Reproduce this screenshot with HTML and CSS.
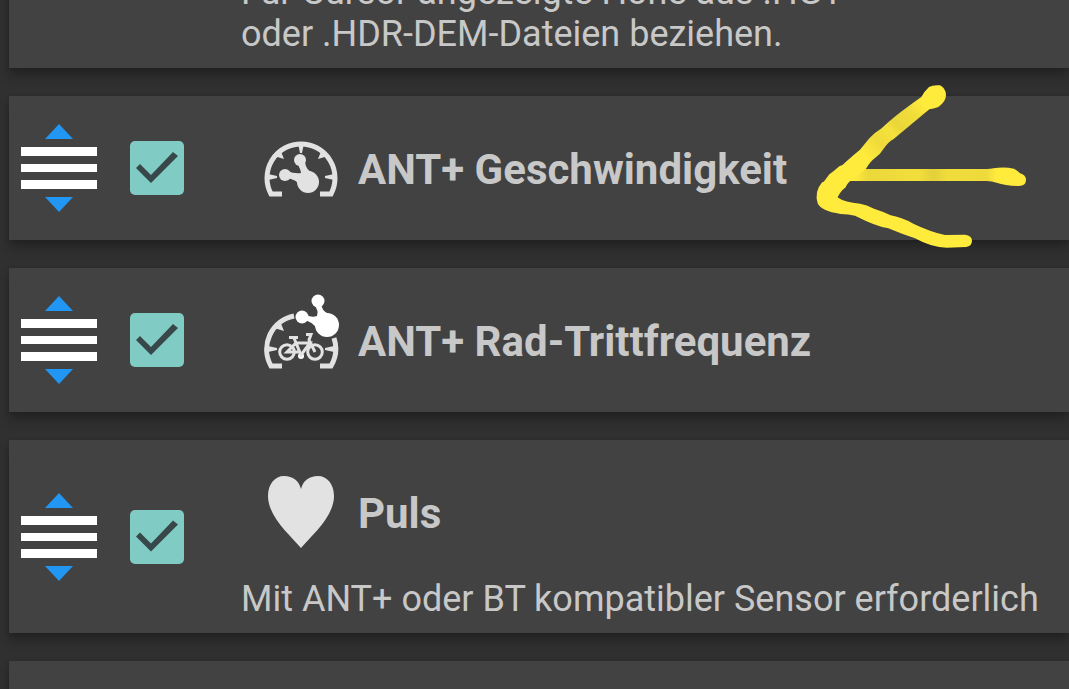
FILE: index.html
```html
<!DOCTYPE html>
<html lang="de">
<head>
  <meta charset="UTF-8">
  <meta name="viewport" content="width=device-width, initial-scale=1.0">
  <title>Sensoren</title>
  <link rel="stylesheet" href="styles.css">
</head>
<body>
  <svg class="defs" aria-hidden="true">
    <symbol id="drag" viewBox="0 0 76 90">
      <path fill="#2196f3" d="M38 1L52 16H24ZM24 74H52L38 89Z"/>
      <path fill="#fff" d="M0 24H76V33H0ZM0 41H76V49H0ZM0 57H76V66H0Z"/>
    </symbol>
  </svg>

  <main class="list">
    <section class="card card-first">
      <div class="content">
        <p class="desc">Für Cursor angezeigte Höhe aus .HGT<br>oder .HDR-DEM-Dateien beziehen.</p>
      </div>
    </section>

    <section class="card">
      <button class="handle" type="button" aria-label="Verschieben"><svg><use href="#drag"/></svg></button>
      <input class="check" type="checkbox" id="speed" checked>
      <div class="content">
        <label class="title" for="speed">
          <svg class="icon" viewBox="0 0 76 96">
            <path class="line" d="M19 74H8A34 34 0 1 1 68 74H57"/>
            <path class="fill" d="M35 23H41L39 33H37ZM11 36L17 29L21 39ZM65 36L59 29L55 39ZM5 54L14 56V58L5 60ZM71 54L62 56V58L71 60Z"/>
            <path class="fill" d="M34 43L42 42Q43 50 49 52L38 67Q34 59 23 58L24 51Q32 54 38 53Q38 50 34 43Z"/>
            <circle class="fill" cx="45" cy="62" r="11"/>
            <circle class="fill" cx="37" cy="40" r="6"/>
            <circle class="fill" cx="22" cy="55" r="6"/>
          </svg>
          <span>ANT+ Geschwindigkeit</span>
        </label>
      </div>
      <!-- hand-drawn arrow over the card -->
      <svg class="arrow" viewBox="30 15 660 510" aria-hidden="true">
        <defs>
          <linearGradient id="upper" gradientUnits="userSpaceOnUse" x1="410" y1="50" x2="150" y2="300">
            <stop offset="0.15" stop-color="#ffeb3b"/>
            <stop offset="0.25" stop-color="#f2df3b"/>
            <stop offset="0.43" stop-color="#e9d63a"/>
            <stop offset="0.5" stop-color="#f6e23b"/>
            <stop offset="0.64" stop-color="#eedb3b"/>
            <stop offset="0.8" stop-color="#ffeb3b"/>
          </linearGradient>
          <linearGradient id="middle" gradientUnits="userSpaceOnUse" x1="140" y1="0" x2="680" y2="0">
            <stop offset="0.04" stop-color="#ffeb3b"/>
            <stop offset="0.12" stop-color="#ebd83a"/>
            <stop offset="0.4" stop-color="#f2de3b"/>
            <stop offset="0.48" stop-color="#e3d03a"/>
            <stop offset="0.56" stop-color="#f0dc3b"/>
            <stop offset="0.78" stop-color="#eedb3b"/>
            <stop offset="0.83" stop-color="#ffeb3b"/>
          </linearGradient>
        </defs>
        <path fill="url(#middle)" d="M140 282H560Q572 282 580 280Q612 274 642 281Q652 287 660 295Q678 299 678 316Q677 333 657 333Q615 332 590 323Q575 318 560 318H140Z"/>
        <path fill="#ffeb3b" d="M112 367Q135 383 180 386Q200 389 222 401Q248 409 272 421Q303 426 340 446Q390 470 435 480L495 479Q516 481 516 498Q515 514 499 516L440 518Q395 518 345 490Q305 477 265 460Q228 454 165 422Q145 417 122 417Q62 408 53 385Q42 350 67 321L100 340Z"/>
        <path fill="url(#upper)" d="M60 332Q75 318 88 298Q100 290 118 274Q130 270 138 260Q165 236 180 224L208 190Q225 172 245 160Q280 125 364 66Q372 50 387 36Q399 29 420 31Q438 41 438 60Q438 80 415 96Q400 102 388 103L280 193Q265 201 252 220Q242 237 225 249Q210 260 198 281L158 312Q142 323 137 337Q120 350 112 369L80 380Z"/>
      </svg>
    </section>

    <section class="card">
      <button class="handle" type="button" aria-label="Verschieben"><svg><use href="#drag"/></svg></button>
      <input class="check" type="checkbox" id="cadence" checked>
      <div class="content">
        <label class="title" for="cadence">
          <svg class="icon" viewBox="0 0 76 96">
            <path class="line" d="M19 74H8A34 34 0 0 1 31 24M71 46A34 34 0 0 1 68 74H57"/>
            <path class="fill" d="M11 36L17 29L21 39ZM5 54L14 56V58L5 60ZM71 54L62 56V58L71 60Z"/>
            <g class="bright">
              <path d="M51 12L58 10Q58 19 66 22L55 39Q51 29 39 28L40 22Q48 26 54 24Q56 19 51 12Z"/>
              <circle cx="64" cy="33" r="12"/>
              <circle cx="55" cy="9" r="6.5"/>
              <circle cx="39" cy="25" r="6.5"/>
              <circle cx="38" cy="64" r="3"/>
            </g>
            <g class="bike">
              <circle cx="24" cy="60" r="7.3"/>
              <circle cx="52" cy="60" r="7.3"/>
              <path d="M26 45.500H35M31 46L38 63L47 51H33L24 60H37M43 42.500H48L46 48L52 60"/>
            </g>
          </svg>
          <span>ANT+ Rad-Trittfrequenz</span>
        </label>
      </div>
    </section>

    <section class="card">
      <button class="handle" type="button" aria-label="Verschieben"><svg><use href="#drag"/></svg></button>
      <input class="check" type="checkbox" id="pulse" checked>
      <div class="content">
        <label class="title" for="pulse">
          <svg class="icon" viewBox="0 0 76 96">
            <path class="fill" d="M38 84C28 72 5 53 5 32C5 20 12 12 21 12C30 12 36 17 38 25C40 17 46 12 55 12C64 12 71 20 71 32C71 53 48 72 38 84Z"/>
          </svg>
          <span>Puls</span>
        </label>
        <p class="desc">Mit ANT+ oder BT kompatibler Sensor erforderlich</p>
      </div>
    </section>

    <section class="card card-last"></section>
  </main>
</body>
</html>
```

FILE: styles.css
```css
body {
  margin: 0;
  background: #303030;
  color: #c8c8c8;
  font-family: Roboto, 'Liberation Sans', sans-serif;
  overflow: hidden;
}
.defs {
  display: none;
}
.list {
  display: flex;
  flex-direction: column;
  gap: 28px;
  margin-top: -42px;
  padding-left: 9px;
}
.card {
  position: relative;
  display: flex;
  align-items: center;
  padding: 13px 0 13px 12px;
  background: #424242;
  box-shadow: 0 8px 10px rgba(0, 0, 0, 0.25), 0 1px 4px rgba(0, 0, 0, 0.15);
}
.card-first {
  padding-left: 232px;
}
.card-last {
  min-height: 2px;
}
.handle {
  flex: none;
  width: 76px;
  height: 90px;
  margin-right: 33px;
  padding: 0;
  border: none;
  background: none;
  cursor: move;
}
.handle svg {
  display: block;
  width: 100%;
  height: 100%;
}
.check {
  flex: none;
  appearance: none;
  width: 54px;
  height: 54px;
  margin: 0 57px 0 0;
  border: 3px solid #80cbc4;
  border-radius: 5px;
}
.check:checked {
  border: none;
  background: #80cbc4;
}
.check:checked::after {
  content: '';
  display: block;
  width: 54px;
  height: 54px;
  background: #37474a;
  clip-path: polygon(6px 27px, 10px 23px, 21px 34px, 43px 11px, 48px 15px, 21px 42px);
}
.content {
  flex: 1;
}
.title {
  display: flex;
  align-items: center;
  gap: 19px;
  min-height: 118px;
  padding-left: 22px;
  font-size: 42px;
  font-weight: bold;
}
.title span {
  padding-top: 2px;
}
.desc {
  margin: 0;
  font-size: 36px;
  line-height: 42px;
  white-space: nowrap;
}
.title + .desc {
  margin-top: 7px;
}
.icon {
  flex: none;
  width: 76px;
  height: 96px;
}
.fill {
  fill: #e2e2e2;
}
.bright {
  fill: #fff;
}
.line {
  fill: none;
  stroke: #e2e2e2;
  stroke-width: 5;
}
.bike {
  fill: none;
  stroke: #e2e2e2;
  stroke-width: 3;
}
.arrow {
  position: absolute;
  top: -16px;
  left: 801px;
  z-index: 1;
  width: 220px;
  height: 170px;
  pointer-events: none;
}
```
